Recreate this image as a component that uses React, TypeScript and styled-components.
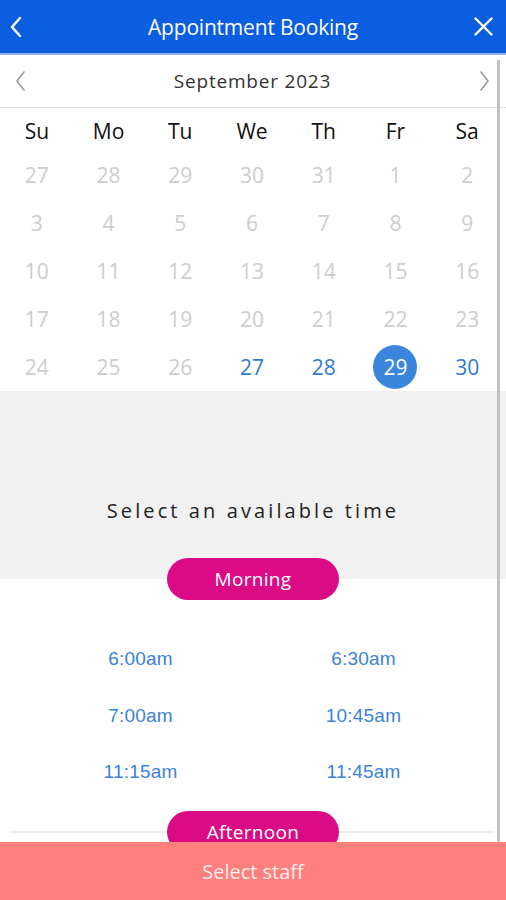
import React from "react";
import styled, { createGlobalStyle } from "styled-components";

const Global = createGlobalStyle`
  html, body { margin: 0; padding: 0; background: #fff; }
  body { font-family: "Open Sans", "Noto Sans", sans-serif; }
  * { box-sizing: border-box; }
`;

const Screen = styled.div`
  width: 506px;
  height: 900px;
  display: flex;
  flex-direction: column;
  overflow: hidden;
  background: #fff;
`;

const Header = styled.header`
  height: 55px;
  flex: none;
  background: #0b5ee0;
  border-bottom: 2px solid #8fb2ef;
  display: grid;
  grid-template-columns: 50px 1fr 50px;
  align-items: center;
  color: #fff;
`;

const HeaderTitle = styled.h1`
  margin: 0;
  text-align: center;
  font-size: 21px;
  font-weight: 400;
  letter-spacing: -0.2px;
`;

const IconButton = styled.button<{ $align: "start" | "end" }>`
  background: none;
  border: 0;
  padding: 0;
  height: 100%;
  display: flex;
  align-items: center;
  justify-content: ${(p) => (p.$align === "start" ? "flex-start" : "flex-end")};
  padding-left: ${(p) => (p.$align === "start" ? "10px" : "0")};
  padding-right: ${(p) => (p.$align === "end" ? "13px" : "0")};
`;

const Body = styled.div`
  flex: 1;
  position: relative;
  overflow: hidden;
`;

const ScrollThumb = styled.div`
  position: absolute;
  right: 6px;
  top: 5px;
  bottom: 0;
  width: 3px;
  background: #c2c2c2;
  z-index: 5;
`;

const MonthBar = styled.div`
  height: 53px;
  display: flex;
  align-items: center;
  justify-content: space-between;
  padding: 0 16px 0 15px;
  border-bottom: 1px solid #e4e4e4;
`;

const MonthTitle = styled.div`
  font-size: 19px;
  color: #333;
  letter-spacing: 0.8px;
`;

const Calendar = styled.div`
  width: 502px;
  margin-left: 1px;
  display: grid;
  grid-template-columns: repeat(7, 1fr);
`;

const Weekday = styled.div`
  height: 43px;
  display: flex;
  align-items: center;
  justify-content: center;
  font-size: 21px;
  color: #111;
  padding-top: 3px;
`;

const DayCell = styled.div`
  height: 48px;
  display: flex;
  align-items: center;
  justify-content: center;
`;

const DayNum = styled.span<{ $state: "muted" | "open" | "selected" }>`
  width: 44px;
  height: 44px;
  border-radius: 50%;
  display: flex;
  align-items: center;
  justify-content: center;
  font-size: 21px;
  font-weight: 400;
  color: ${(p) =>
    p.$state === "muted" ? "#cdcdcd" : p.$state === "open" ? "#2f7bd6" : "#fff"};
  background: ${(p) => (p.$state === "selected" ? "#3a86dc" : "transparent")};
`;

const Band = styled.div`
  height: 188px;
  background: #f1f1f1;
  display: flex;
  justify-content: center;
  padding-top: 106px;
`;

const BandText = styled.div`
  font-size: 20px;
  line-height: 28px;
  letter-spacing: 3.1px;
  color: #222;
`;

const Pill = styled.div`
  position: relative;
  z-index: 2;
  width: 172px;
  height: 42px;
  border-radius: 21px;
  background: #db0a85;
  color: #fff;
  font-size: 19px;
  letter-spacing: 0.3px;
  display: flex;
  align-items: center;
  justify-content: center;
  margin: 0 auto;
`;

const MorningPill = styled(Pill)`
  margin-top: -21px;
`;

const TimeGrid = styled.div`
  display: grid;
  grid-template-columns: 223px 223px;
  grid-auto-rows: 56.5px;
  margin: 31px 0 0 29px;
`;

const TimeSlot = styled.div`
  display: flex;
  align-items: center;
  justify-content: center;
  font-family: "Liberation Sans", Arial, sans-serif;
  font-size: 19px;
  color: #3b82da;
  letter-spacing: 0.2px;
`;

const Divider = styled.div`
  position: relative;
  margin-top: 10px;
  display: flex;
  justify-content: center;
  &::before {
    content: "";
    position: absolute;
    left: 10px;
    right: 12px;
    top: 20px;
    height: 2px;
    background: #ececec;
  }
`;

const Footer = styled.div`
  height: 58px;
  flex: none;
  background: #ff7f7c;
  color: #ffecec;
  font-size: 20px;
  display: flex;
  align-items: center;
  justify-content: center;
  position: relative;
  z-index: 6;
`;

const Chevron = ({ dir, color, w, h, sw }: { dir: "l" | "r"; color: string; w: number; h: number; sw: number }) => (
  <svg width={w} height={h} viewBox={`0 0 ${w} ${h}`} fill="none">
    <path
      d={dir === "l" ? `M${w - 2} 1 L2 ${h / 2} L${w - 2} ${h - 1}` : `M2 1 L${w - 2} ${h / 2} L2 ${h - 1}`}
      stroke={color}
      strokeWidth={sw}
      strokeLinecap="round"
      strokeLinejoin="round"
    />
  </svg>
);

const days: { n: number; s: "muted" | "open" | "selected" }[] = [
  ...[27, 28, 29, 30, 31].map((n) => ({ n, s: "muted" as const })),
  ...Array.from({ length: 26 }, (_, i) => ({ n: i + 1, s: "muted" as const })),
  { n: 27, s: "open" },
  { n: 28, s: "open" },
  { n: 29, s: "selected" },
  { n: 30, s: "open" },
];

const weekdays = ["Su", "Mo", "Tu", "We", "Th", "Fr", "Sa"];
const times = ["6:00am", "6:30am", "7:00am", "10:45am", "11:15am", "11:45am"];

export default function App() {
  return (
    <>
      <Global />
      <Screen>
        <Header>
          <IconButton $align="start" aria-label="Back">
            <Chevron dir="l" color="#fff" w={12} h={20} sw={2.4} />
          </IconButton>
          <HeaderTitle>Appointment Booking</HeaderTitle>
          <IconButton $align="end" aria-label="Close">
            <svg width="19" height="19" viewBox="0 0 19 19">
              <path d="M1.5 1.5 L17.5 17.5 M17.5 1.5 L1.5 17.5" stroke="#fff" strokeWidth="2.4" strokeLinecap="round" />
            </svg>
          </IconButton>
        </Header>
        <Body>
          <ScrollThumb />
          <MonthBar>
            <Chevron dir="l" color="#9a9a9a" w={11} h={20} sw={1.6} />
            <MonthTitle>September 2023</MonthTitle>
            <Chevron dir="r" color="#9a9a9a" w={11} h={20} sw={1.6} />
          </MonthBar>
          <Calendar>
            {weekdays.map((d) => (
              <Weekday key={d}>{d}</Weekday>
            ))}
            {days.map((d, i) => (
              <DayCell key={i}>
                <DayNum $state={d.s}>{d.n}</DayNum>
              </DayCell>
            ))}
          </Calendar>
          <Band>
            <BandText>Select an available time</BandText>
          </Band>
          <MorningPill>Morning</MorningPill>
          <TimeGrid>
            {times.map((t) => (
              <TimeSlot key={t}>{t}</TimeSlot>
            ))}
          </TimeGrid>
          <Divider>
            <Pill>Afternoon</Pill>
          </Divider>
        </Body>
        <Footer>Select staff</Footer>
      </Screen>
    </>
  );
}
